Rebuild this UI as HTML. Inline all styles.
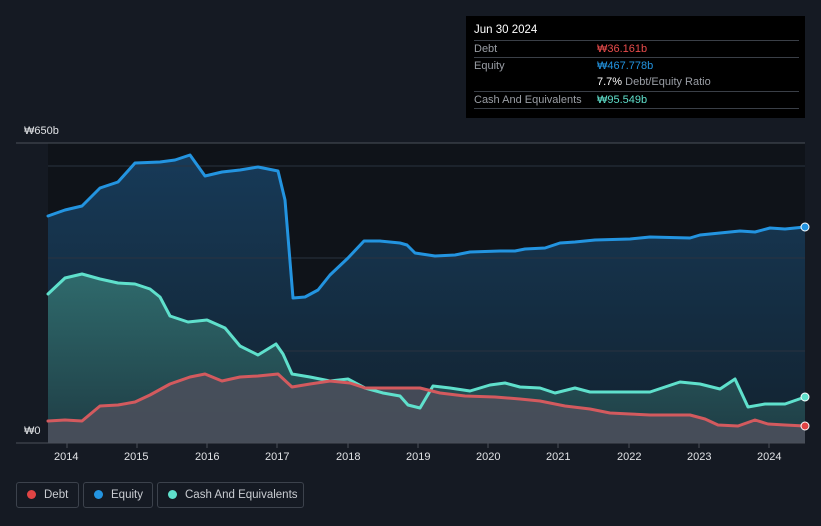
<!DOCTYPE html>
<html><head><meta charset="utf-8"><style>
body{margin:0;width:821px;height:526px;background:#151a23;font-family:"Liberation Sans",sans-serif;overflow:hidden;position:relative}
.tt{position:absolute;left:466px;top:16px;width:339px;height:102px;background:#000;color:#fff;font-size:11px}
.tt .h{position:absolute;left:8px;top:8px;font-size:11.5px}
.row{position:absolute;left:8px;width:325px;border-top:1px solid #3a3f47;height:17px;line-height:17px;color:#9a9ea5;white-space:nowrap}
.row span{position:absolute;left:123px}
.lg{position:absolute;top:482px;height:26px;border:1px solid #3c424c;border-radius:3px;color:#c9ccd1;font-size:11.5px;line-height:24px;box-sizing:border-box;white-space:nowrap}
.lg i{display:inline-block;width:9px;height:9px;border-radius:50%;margin:0 8px 0 10px;vertical-align:-1px}
.ax{position:absolute;color:#e0e2e5;font-size:11px}
</style></head><body>
<svg width="821" height="526" style="position:absolute;left:0;top:0">
<defs>
<linearGradient id="eq" x1="0" y1="0" x2="0" y2="1"><stop offset="0" stop-color="#173a58"/><stop offset="1" stop-color="#12222f"/></linearGradient>
<linearGradient id="ca" x1="0" y1="0" x2="0" y2="1"><stop offset="0" stop-color="#2f6a6c"/><stop offset="1" stop-color="#1e3c44"/></linearGradient>
</defs>
<rect x="48" y="143" width="757" height="300" fill="#0f1319"/>
<polygon fill="url(#eq)" points="48,443 48,216 65,210 82,206 100,188 118,182 135,163 160,162 175,160 190,155 205,176 222,172 240,170 258,167 278,171 285,200 293,298 305,297 318,290 330,275 348,258 364,241 380,241 400,243 407,245 415,253 435,256 455,255 470,252 500,251 515,251 525,249 545,248 560,243 575,242 595,240 630,239 650,237 690,238 700,235 720,233 740,231 755,232 770,228 785,229 805,227 805,443"/>
<g stroke="#2a3340" stroke-width="1"><line x1="48" y1="166" x2="805" y2="166"/><line x1="48" y1="258" x2="805" y2="258"/><line x1="48" y1="351" x2="805" y2="351"/></g>
<line x1="16" y1="143" x2="805" y2="143" stroke="#4a5059"/>
<polygon fill="url(#ca)" points="48,443 48,294 65,278 82,274 100,279 118,283 135,284 150,289 160,297 170,316 188,322 207,320 225,328 240,346 258,355 276,344 283,354 292,374 310,377 330,381 348,379 365,388 383,393 400,396 408,405 420,408 433,386 450,388 470,391 490,385 505,383 520,387 540,388 555,393 575,388 590,392 610,392 630,392 650,392 665,387 680,382 700,384 720,389 735,379 748,407 765,404 785,404 805,397 805,443"/>
<polygon fill="#4a4f5b" fill-opacity="0.9" points="48,443 48,421 65,420 82,421 100,406 118,405 135,402 150,395 170,384 190,377 205,374 222,381 240,377 258,376 278,374 292,387 310,384 330,381 350,383 365,388 380,388 400,388 420,388 440,393 465,396 495,397 520,399 540,401 565,406 590,409 610,413 630,414 650,415 690,415 705,419 718,425 738,426 755,420 768,424 785,425 805,426 805,443"/>
<g fill="none" stroke-width="3" stroke-linejoin="round" stroke-linecap="round">
<polyline stroke="#2394e0" points="48,216 65,210 82,206 100,188 118,182 135,163 160,162 175,160 190,155 205,176 222,172 240,170 258,167 278,171 285,200 293,298 305,297 318,290 330,275 348,258 364,241 380,241 400,243 407,245 415,253 435,256 455,255 470,252 500,251 515,251 525,249 545,248 560,243 575,242 595,240 630,239 650,237 690,238 700,235 720,233 740,231 755,232 770,228 785,229 805,227"/>
<polyline stroke="#5fe0cc" points="48,294 65,278 82,274 100,279 118,283 135,284 150,289 160,297 170,316 188,322 207,320 225,328 240,346 258,355 276,344 283,354 292,374 310,377 330,381 348,379 365,388 383,393 400,396 408,405 420,408 433,386 450,388 470,391 490,385 505,383 520,387 540,388 555,393 575,388 590,392 610,392 630,392 650,392 665,387 680,382 700,384 720,389 735,379 748,407 765,404 785,404 805,397"/>
<polyline stroke="#d35a5e" points="48,421 65,420 82,421 100,406 118,405 135,402 150,395 170,384 190,377 205,374 222,381 240,377 258,376 278,374 292,387 310,384 330,381 350,383 365,388 380,388 400,388 420,388 440,393 465,396 495,397 520,399 540,401 565,406 590,409 610,413 630,414 650,415 690,415 705,419 718,425 738,426 755,420 768,424 785,425 805,426"/>
</g>
<circle cx="805" cy="227" r="4" fill="#2394e0" stroke="#fff" stroke-width="1"/>
<circle cx="805" cy="397" r="4" fill="#5fe0cc" stroke="#fff" stroke-width="1"/>
<circle cx="805" cy="426" r="4" fill="#e04444" stroke="#fff" stroke-width="1"/>
<line x1="16" y1="443" x2="805" y2="443" stroke="#4a5059"/>
<g stroke="#4a5059"><line x1="67" y1="443" x2="67" y2="448"/><line x1="137" y1="443" x2="137" y2="448"/><line x1="207" y1="443" x2="207" y2="448"/><line x1="277" y1="443" x2="277" y2="448"/><line x1="348" y1="443" x2="348" y2="448"/><line x1="418" y1="443" x2="418" y2="448"/><line x1="488" y1="443" x2="488" y2="448"/><line x1="558" y1="443" x2="558" y2="448"/><line x1="629" y1="443" x2="629" y2="448"/><line x1="699" y1="443" x2="699" y2="448"/><line x1="769" y1="443" x2="769" y2="448"/></g>
</svg>
<div class="ax" style="left:24px;top:125px">₩650b</div>
<div class="ax" style="left:24px;top:425px">₩0</div>
<div class="ax" style="left:54px;top:451px">2014</div><div class="ax" style="left:124px;top:451px">2015</div><div class="ax" style="left:195px;top:451px">2016</div><div class="ax" style="left:265px;top:451px">2017</div><div class="ax" style="left:336px;top:451px">2018</div><div class="ax" style="left:406px;top:451px">2019</div><div class="ax" style="left:476px;top:451px">2020</div><div class="ax" style="left:546px;top:451px">2021</div><div class="ax" style="left:617px;top:451px">2022</div><div class="ax" style="left:687px;top:451px">2023</div><div class="ax" style="left:757px;top:451px">2024</div>
<div class="tt">
<div class="h">Jun 30 2024</div>
<div class="row" style="top:24px">Debt<span style="color:#e84b4b">₩36.161b</span></div>
<div class="row" style="top:41px">Equity<span style="color:#2394e0">₩467.778b</span></div>
<div class="row" style="top:58px;border-top:none"><span style="color:#9a9ea5"><b style="color:#fff;font-weight:normal">7.7%</b> Debt/Equity Ratio</span></div>
<div class="row" style="top:75px">Cash And Equivalents<span style="color:#5fe0cc">₩95.549b</span></div>
<div class="row" style="top:92px;height:0"></div>
</div>
<div class="lg" style="left:16px;width:63px"><i style="background:#e04444"></i>Debt</div>
<div class="lg" style="left:83px;width:70px"><i style="background:#2394e0"></i>Equity</div>
<div class="lg" style="left:157px;width:147px"><i style="background:#5fe0cc"></i>Cash And Equivalents</div>
</body></html>
